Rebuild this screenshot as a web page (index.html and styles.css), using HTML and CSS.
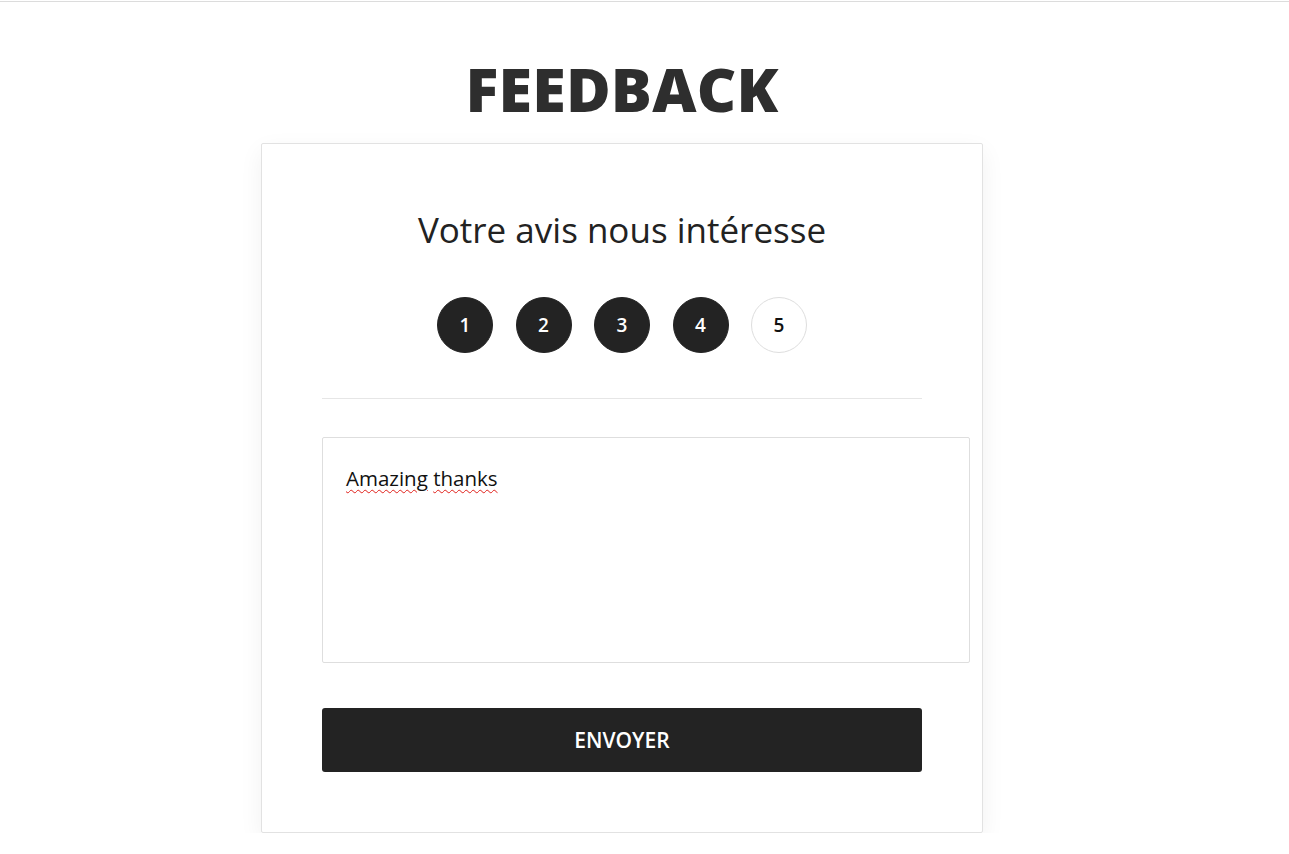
FILE: index.html
```html
<!DOCTYPE html>
<html lang="fr">
<head>
<meta charset="utf-8">
<title>Feedback</title>
<link rel="stylesheet" href="styles.css">
</head>
<body>
<div class="topbar"></div>
<main class="page">
  <h1 class="page-title">FEEDBACK</h1>
  <section class="card">
    <h2 class="card-title">Votre avis nous intéresse</h2>
    <div class="rating">
      <button class="rate is-on">1</button>
      <button class="rate is-on">2</button>
      <button class="rate is-on">3</button>
      <button class="rate is-on">4</button>
      <button class="rate">5</button>
    </div>
    <hr class="divider">
    <div class="message" role="textbox" contenteditable="true" spellcheck="false"><span class="typo">Amazing</span> <span class="typo">thanks</span></div>
    <button class="submit">ENVOYER</button>
  </section>
</main>
</body>
</html>
```
FILE: styles.css
```css
* { box-sizing: border-box; }
html, body { margin: 0; padding: 0; background: #fff; }
body { font-family: "Open Sans", "Noto Sans", "Liberation Sans", sans-serif; color: #222; }
.topbar { height: 2px; border-bottom: 1px solid #dcdcdc; }
.page { display: flex; flex-direction: column; align-items: center; padding-right: 45px; }
.page-title {
  margin: 51px 0 0;
  font-size: 61px;
  line-height: 72px;
  font-weight: 800;
  color: #2e2e2e;
  letter-spacing: 0.2px;
}
.card {
  margin-top: 18px;
  width: 722px;
  padding: 61px 60px 60px;
  border: 1px solid #e2e2e2;
  border-radius: 2px;
  background: #fff;
  box-shadow: 0 8px 24px rgba(0,0,0,0.06);
  display: flex;
  flex-direction: column;
  align-items: stretch;
}
.card-title {
  margin: 0;
  text-align: center;
  font-size: 35px;
  line-height: 50px;
  font-weight: 400;
  color: #222;
}
.rating {
  margin-top: 42px;
  display: flex;
  justify-content: center;
  gap: 22.5px;
}
.rate {
  width: 56px;
  height: 56px;
  border-radius: 50%;
  border: 1px solid #dedede;
  background: #fff;
  color: #111;
  font-family: inherit;
  font-size: 19px;
  font-weight: 600;
  padding: 0;
}
.rate.is-on { background: #232323; border-color: #232323; color: #fff; }
.divider {
  margin: 45px 0 0;
  border: 0;
  border-top: 1px solid #e6e6e6;
  height: 0;
}
.message {
  box-sizing: content-box;
  margin-top: 38px;
  width: 600px;
  height: 172px;
  padding: 26px 23px 26px;
  border: 1px solid #dedede;
  border-radius: 2px;
  font-size: 20.5px;
  line-height: 1.4;
  color: #111;
  outline: none;
}
.typo {
  text-decoration: underline wavy #e0201a;
  text-decoration-thickness: 1px;
  text-underline-offset: 3px;
}
.submit {
  margin-top: 45px;
  height: 64px;
  width: 100%;
  border: 0;
  border-radius: 3px;
  background: #232323;
  color: #fff;
  font-family: inherit;
  font-size: 21px;
  font-weight: 600;
  letter-spacing: 0;
}
```
